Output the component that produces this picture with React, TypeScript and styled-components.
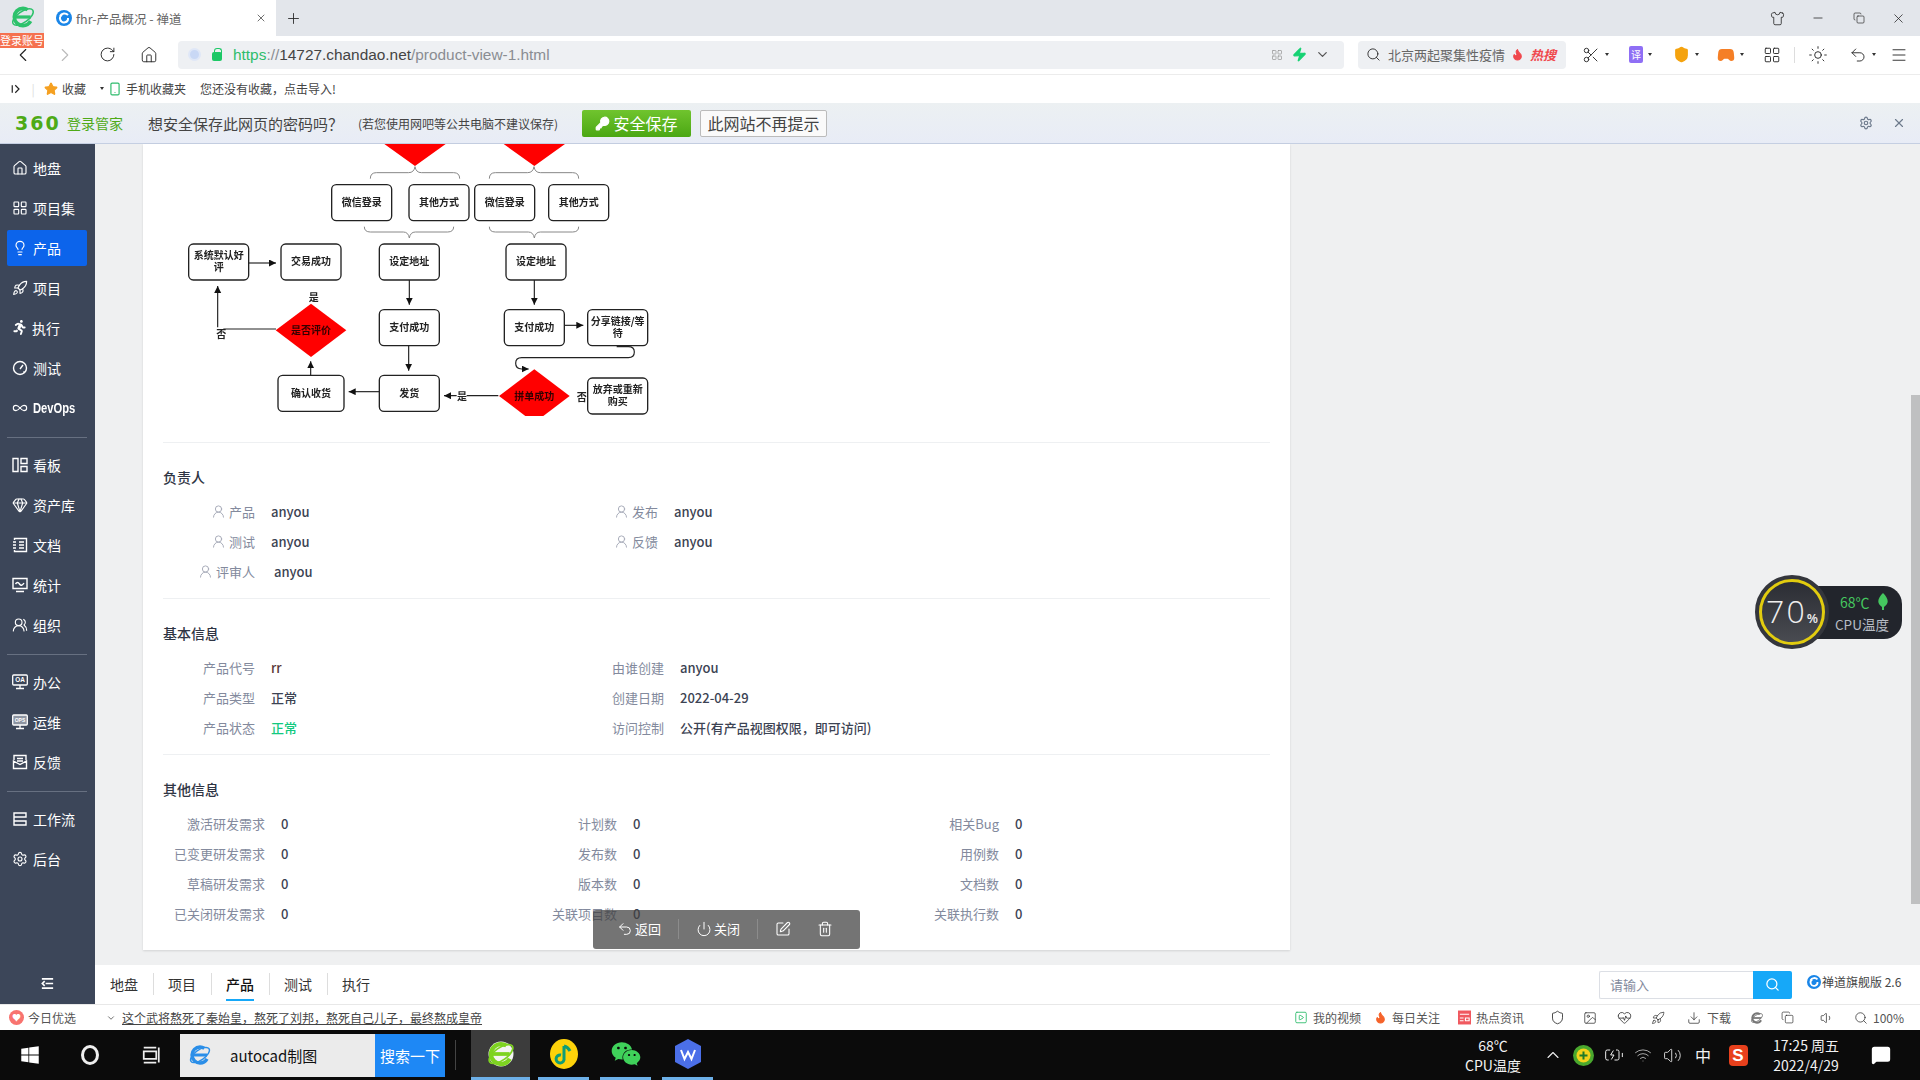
import styled, { createGlobalStyle } from 'styled-components'
import {
    ChevronLeft, ChevronRight, ChevronDown, ChevronUp, RotateCw, House, Search, Zap, Scissors, LayoutGrid, Sun, Undo2, Menu,
    Shirt, Minus, Copy, X, Plus, Settings, Star, Smartphone, KeyRound, Lightbulb, Rocket, Infinity as InfinityIcon, Flame, Gamepad2,
    Gem, UsersRound, UserRound, Power, SquarePen, Trash2, Shield, Image as ImageIcon, HeartPulse, Download, Volume1, Volume2, Wifi,
    BatteryCharging, MessageSquare, SquarePlay,
} from 'lucide-react'
import { FaRunning, FaWindows, FaWeixin } from 'react-icons/fa'
import type { ReactNode } from 'react'

const Global = createGlobalStyle`
    html, body { margin: 0; padding: 0; background: #fff; overflow: hidden; }
    * { box-sizing: border-box; }
    body { font-family: "Noto Sans CJK SC", "Liberation Sans", sans-serif; font-size: 13px; color: #3c4353; }
`

const Page = styled.div`
    position: relative;
    display: flex;
    flex-direction: column;
    width: 1920px;
    height: 1080px;
    overflow: hidden;
`

const Slot = styled.div<{ $w: number; $color?: string }>`
    display: flex;
    align-items: center;
    justify-content: center;
    flex: none;
    width: ${p => p.$w}px;
    height: 100%;
    color: ${p => p.$color || '#222'};
`

const Spring = styled.div`flex: 1;`

/* ---- browser chrome ---- */
const TabBar = styled.div`
    display: flex;
    height: 36px;
    background: #e3e6eb;
    padding-left: 44px;
`

const Tab = styled.div`
    display: flex;
    align-items: center;
    width: 232px;
    padding-left: 12px;
    background: #fff;
    font-size: 12.5px;
    color: #666;
`

const TabTitle = styled.span`
    margin-left: 4px;
    flex: 1;
`

const Logo = styled.div`
    position: absolute;
    left: 10px;
    top: 4px;
`

const Badge = styled.div`
    position: absolute;
    left: 0;
    top: 33px;
    width: 44px;
    height: 15px;
    background: #f5714f;
    color: #fff;
    font-size: 11px;
    line-height: 15px;
    text-align: center;
    white-space: nowrap;
`

const Toolbar = styled.div`
    display: flex;
    align-items: center;
    height: 39px;
    padding: 5px 0 6px 2px;
    border-bottom: 1px solid #ececec;
    background: #fff;
`

const Address = styled.div`
    display: flex;
    align-items: center;
    flex: none;
    width: 1166px;
    height: 28px;
    margin-left: 8px;
    padding-left: 10px;
    background: #eef0f3;
    border-radius: 4px;
`

const Eye = styled.div`
    width: 13px;
    height: 13px;
    border-radius: 50%;
    background: #c9d8f5;
    border: 2px solid #dfe7f7;
`

const Lock = styled.div`
    width: 10px;
    height: 9px;
    margin: 3px 0 0 11px;
    border-radius: 2px;
    background: #1cc866;
    position: relative;
    &::before {
        content: '';
        position: absolute;
        left: 2px;
        top: -4px;
        width: 6px;
        height: 6px;
        border: 1.5px solid #1cc866;
        border-bottom: 0;
        border-radius: 3px 3px 0 0;
    }
`

const Url = styled.div`
    margin-left: 11px;
    font: 15.4px "Liberation Sans", sans-serif;
    color: #8a8d92;
    flex: 1;
`

const UrlPart = styled.span<{ $color: string }>`
    color: ${p => p.$color};
`

const HotSearch = styled.div`
    display: flex;
    align-items: center;
    flex: none;
    width: 208px;
    height: 28px;
    margin-left: 14px;
    padding-left: 6px;
    background: #eef0f3;
    border-radius: 4px;
    font-size: 13px;
    color: #666;
    white-space: nowrap;
`

const HotTag = styled.span`
    margin-left: 1px;
    color: #f0484d;
    font-weight: 700;
    font-style: italic;
`

const ToolGap = styled.div`
    flex: none;
    width: 3px;
`

const ToolDrop = styled.div<{ $w?: number }>`
    display: flex;
    align-items: center;
    justify-content: center;
    flex: none;
    width: ${p => p.$w ?? 45}px;
    padding-left: 8px;
    gap: 5px;
    color: #222;
    &::after {
        content: '';
        border-top: 3px solid #333;
        border-left: 2.5px solid transparent;
        border-right: 2.5px solid transparent;
    }
`

const ToolSep = styled.div`
    width: 1px;
    height: 16px;
    background: #ddd;
    flex: none;
`

const Tile = styled.div<{ $bg: string }>`
    width: 14px;
    height: 17px;
    background: ${p => p.$bg};
    border-radius: 2px;
    color: #fff;
    font-size: 10px;
    line-height: 17px;
    text-align: center;
`

const Bookmarks = styled.div`
    display: flex;
    align-items: center;
    height: 28px;
    padding: 0 0 1px 10px;
    font-size: 12px;
    color: #444;
    background: #fff;
`

const BookText = styled.span<{ $ml?: number }>`
    margin-left: ${p => p.$ml ?? 0}px;
    white-space: nowrap;
`

const Caret = styled.span`
    margin-left: 14px;
    border-top: 3px solid #333;
    border-left: 2.5px solid transparent;
    border-right: 2.5px solid transparent;
`

const PassBar = styled.div`
    display: flex;
    align-items: center;
    height: 41px;
    padding-left: 15px;
    background: linear-gradient(#ecf0f2, #e8ecf6);
    border-bottom: 1px solid #c5cfe2;
    color: #444;
`

const Brand360 = styled.span`
    font: 700 19px "DejaVu Sans", sans-serif;
    letter-spacing: 2px;
    color: #4eaa16;
    width: 52px;
`

const BrandName = styled.span`
    font-size: 14px;
    color: #4eaa16;
    width: 81px;
`

const PassAsk = styled.span`
    font-size: 15px;
    width: 210px;
    white-space: nowrap;
`

const PassNote = styled.span`
    font-size: 12px;
    width: 224px;
    white-space: nowrap;
`

const SaveBtn = styled.div`
    display: flex;
    align-items: center;
    justify-content: center;
    gap: 3px;
    width: 109px;
    height: 27px;
    border-radius: 2px;
    background: linear-gradient(#70c42e, #4ba713);
    color: #fff;
    font-size: 16px;
`

const NoAskBtn = styled.div`
    width: 127px;
    height: 27px;
    margin-left: 9px;
    border: 1px solid #bbb;
    border-radius: 2px;
    background: #fafafa;
    color: #444;
    font-size: 16px;
    line-height: 25px;
    text-align: center;
`

/* ---- zentao page ---- */
const Main = styled.div`
    display: flex;
    height: 860px;
`

const Sidebar = styled.nav`
    display: flex;
    flex-direction: column;
    flex: none;
    width: 95px;
    padding-top: 6px;
    background: #3c4659;
`

const NavItem = styled.div<{ $active?: boolean }>`
    display: flex;
    align-items: center;
    gap: 5px;
    height: 36px;
    margin: 0 8px 4px 7px;
    padding: 0 0 1px 5px;
    border-radius: 2px;
    color: #fff;
    font-size: 14px;
    white-space: nowrap;
    background: ${p => (p.$active ? '#0c64eb' : 'transparent')};
`

const DevOps = styled.span`
    display: inline-block;
    font: 700 14px "Liberation Sans", sans-serif;
    transform: scaleX(0.8);
    transform-origin: left center;
`

const NavLine = styled.div`
    height: 1px;
    margin: 7px 8px 9px 7px;
    background: #677081;
`

const NavToggle = styled.div`
    display: flex;
    align-items: center;
    justify-content: center;
    height: 40px;
    margin-top: auto;
    padding-bottom: 2px;
    color: #fff;
`

const Content = styled.div`
    display: flex;
    flex-direction: column;
    flex: 1;
    min-width: 0;
    background: #eff0f1;
`

const Scroller = styled.div`
    display: flex;
    flex: none;
    height: 821px;
`

const Card = styled.div`
    width: 1147px;
    height: 806px;
    margin-left: 48px;
    padding: 0 20px;
    background: #fff;
    box-shadow: 0 1px 2px rgba(0, 0, 0, 0.12);
    overflow: hidden;
`

const Flow = styled.svg`
    display: block;
    margin-left: 7px;
    filter: blur(0.3px);
`

const Section = styled.section`
    padding: 24px 0 12px;
    border-top: 1px solid #eef0f2;
`

const Heading = styled.h3`
    margin: 0 0 9px;
    font-size: 14px;
    line-height: 20px;
    font-weight: 500;
    color: #2f3544;
`

const FieldGrid = styled.div<{ $cols: string }>`
    display: grid;
    grid-template-columns: ${p => p.$cols};
    grid-auto-rows: 30px;
`

const Field = styled.div<{ $gap?: number }>`
    display: flex;
    align-items: center;
    gap: ${p => p.$gap ?? 16}px;
`

const Label = styled.div<{ $w: number }>`
    display: flex;
    align-items: center;
    justify-content: flex-end;
    gap: 3px;
    width: ${p => p.$w}px;
    color: #838a9d;
    white-space: nowrap;
`

const Value = styled.div<{ $color?: string }>`
    color: ${p => p.$color || '#3c4353'};
    font-weight: 500;
    white-space: nowrap;
`

const ScrollSpace = styled.div`
    flex: 1;
`

const ScrollThumb = styled.div`
    flex: none;
    width: 9px;
    height: 509px;
    margin-top: 251px;
    background: #bfc0c1;
`

const BottomNav = styled.div`
    display: flex;
    align-items: center;
    height: 39px;
    background: #fff;
    font-size: 14px;
    color: #333;
`

const BottomLink = styled.div<{ $active?: boolean }>`
    position: relative;
    margin-top: -2px;
    padding: 0 15px;
    line-height: 22px;
    font-weight: ${p => (p.$active ? 500 : 400)};
    color: ${p => (p.$active ? '#111' : '#333')};
    & + & { border-left: 1px solid #ddd; padding-left: 14px; }
    ${p => p.$active && `
        &::after {
            content: '';
            position: absolute;
            left: 14px;
            right: 15px;
            bottom: -6px;
            height: 2px;
            background: #16a8f8;
        }
    `}
`

const SearchInput = styled.div`
    width: 154px;
    height: 28px;
    padding-left: 10px;
    border: 1px solid #dcdfe5;
    border-right: 0;
    border-radius: 2px 0 0 2px;
    color: #838a9d;
    font-size: 13px;
    line-height: 26px;
`

const SearchBtn = styled.div`
    display: flex;
    align-items: center;
    justify-content: center;
    width: 39px;
    height: 28px;
    border-radius: 0 2px 2px 0;
    background: #16a8f8;
    color: #fff;
`

const Version = styled.div`
    display: flex;
    align-items: center;
    gap: 1px;
    width: 128px;
    padding-left: 15px;
    margin-top: -6px;
    font-size: 12px;
    color: #444;
    white-space: nowrap;
`

const Floater = styled.div`
    position: absolute;
    left: 593px;
    top: 910px;
    display: flex;
    align-items: center;
    width: 267px;
    height: 39px;
    padding: 0 0 2px 24px;
    border-radius: 3px;
    background: rgba(64, 64, 64, 0.73);
    color: #fff;
    font-size: 13px;
`

const FloatBtn = styled.div`
    display: flex;
    align-items: center;
    gap: 2px;
`

const FloatSep = styled.div`
    width: 1px;
    height: 20px;
    margin: 0 17px;
    background: #8c8c8c;
`

const FloatTrash = styled.div`
    display: flex;
    margin-left: 26px;
`

const CpuWidget = styled.div`
    position: absolute;
    left: 1755px;
    top: 574px;
    display: flex;
    align-items: center;
    width: 147px;
    height: 76px;
`

const CpuDial = styled.div`
    z-index: 1;
    flex: none;
    display: flex;
    align-items: baseline;
    justify-content: center;
    width: 74px;
    height: 74px;
    padding-top: 9px;
    border-radius: 50%;
    border: 5px solid #34363c;
    outline: 3px solid #e2cc0f;
    outline-offset: -7px;
    background: linear-gradient(#2a2c33, #4a4c52);
    color: #eee;
    font: 300 32px "Open Sans", sans-serif;
    letter-spacing: 2px;
`

const CpuUnit = styled.span`
    font-size: 13px;
    font-weight: 600;
    letter-spacing: 0;
`

const CpuPill = styled.div`
    flex: 1;
    height: 53px;
    margin-left: -20px;
    padding: 5px 0 0 26px;
    border-radius: 0 18px 18px 0;
    background: #22252c;
    color: #b7bcc4;
    font-size: 13.5px;
    line-height: 22px;
    white-space: nowrap;
`

const CpuTemp = styled.div`
    display: flex;
    align-items: center;
    gap: 7px;
    padding-left: 5px;
    font-size: 14px;
    color: #45c75f;
`

const StatusBar = styled.div`
    display: flex;
    align-items: center;
    height: 26px;
    border-top: 1px solid #e8e8e8;
    padding-left: 9px;
    background: #fff;
    font-size: 12px;
    color: #555;
    white-space: nowrap;
`

const StatusText = styled.span<{ $ml?: number; $w?: number }>`
    margin-left: ${p => p.$ml ?? 0}px;
    ${p => p.$w && `width: ${p.$w}px;`}
`

const NewsLink = styled.span`
    margin-left: 6px;
    text-decoration: underline;
    color: #444;
`

const HeartDot = styled.div`
    display: flex;
    align-items: center;
    justify-content: center;
    width: 15px;
    height: 15px;
    border-radius: 50%;
    background: #f8736f;
    color: #fff;
    font-size: 9px;
`

const Taskbar = styled.div`
    display: flex;
    align-items: center;
    height: 50px;
    background: #0b0b0b;
    color: #f2f2f2;
`

const RingIcon = styled.div`
    width: 18px;
    height: 20px;
    border: 3px solid #eee;
    border-radius: 50%;
`

const TaskSearch = styled.div`
    display: flex;
    align-items: center;
    width: 265px;
    height: 43px;
    padding-left: 8px;
    background: #ebebeb;
    color: #111;
    font-size: 15px;
`

const TaskSearchBtn = styled.div`
    flex: none;
    width: 70px;
    height: 100%;
    margin-left: auto;
    background: #1e88f5;
    color: #fff;
    line-height: 43px;
    text-align: center;
    white-space: nowrap;
`

const TaskSep = styled.div`
    width: 1px;
    height: 30px;
    margin: 0 15px 0 10px;
    background: #444;
`

const TaskApp = styled.div<{ $w: number; $ml: number; $active?: boolean }>`
    display: flex;
    align-items: center;
    justify-content: center;
    flex: none;
    width: ${p => p.$w}px;
    height: 50px;
    margin-left: ${p => p.$ml}px;
    background: ${p => (p.$active ? '#3c3c3c' : 'transparent')};
    border-bottom: 3px solid #6db0e8;
`

const TaskTwoLines = styled.div<{ $w: number; $size?: number }>`
    flex: none;
    width: ${p => p.$w}px;
    font-size: ${p => p.$size ?? 14}px;
    line-height: 20px;
    text-align: center;
    white-space: nowrap;
`

const SogouMark = styled.div`
    width: 19px;
    height: 21px;
    border-radius: 4px;
    background: #e8401c;
    color: #fff;
    font: 700 17px/21px "Liberation Sans", sans-serif;
    text-align: center;
`

const FlowBox = ({ x, y, w = 180, lines }: { x: number; y: number; w?: number; lines: string[] }) => (
    <g>
        <rect x={x} y={y} width={w} height={108} rx={14} fill="#fff" stroke="#222" strokeWidth={4} />
        {lines.map((l, i) => (
            <text key={l} x={x + w / 2} y={y + 64 + (i - (lines.length - 1) / 2) * 36} textAnchor="middle" fontSize={30} fontWeight={700} fill="#222">{l}</text>
        ))}
    </g>
)

const braceTop = (x: number) => `M${x} 116q0-18 18-18h97q16 0 19-18q3 18 19 18h97q18 0 18 18`
const braceBottom = (x: number) => `M${x} 260q0 16 18 16h99q15 0 18 18q3-18 18-18h97q18 0 18-16`

const FlowChart = () => (
    <Flow width={500} height={298} viewBox="0 12 1500 894" fontFamily='"Noto Sans CJK SC", sans-serif'>
        <defs>
            <marker id="tip" markerWidth="8" markerHeight="8" refX="6" refY="3" orient="auto">
                <path d="M0 0L6 3L0 6z" fill="#111" />
            </marker>
        </defs>
        <path d="M643 12h184l-92 66zM1001 12h184l-92 66z" fill="#f00" />
        <path d={braceTop(601)} fill="none" stroke="#888" strokeWidth={3} />
        <path d={braceTop(958)} fill="none" stroke="#888" strokeWidth={3} />
        <path d={braceBottom(583)} fill="none" stroke="#888" strokeWidth={3} />
        <path d={braceBottom(958)} fill="none" stroke="#888" strokeWidth={3} />
        <FlowBox x={485} y={134} lines={['微信登录']} />
        <FlowBox x={717} y={134} lines={['其他方式']} />
        <FlowBox x={914} y={134} lines={['微信登录']} />
        <FlowBox x={1136} y={134} lines={['其他方式']} />
        <FlowBox x={56} y={312} lines={['系统默认好', '评']} />
        <FlowBox x={333} y={312} lines={['交易成功']} />
        <FlowBox x={628} y={312} lines={['设定地址']} />
        <FlowBox x={1008} y={312} lines={['设定地址']} />
        <FlowBox x={628} y={509} lines={['支付成功']} />
        <FlowBox x={1003} y={509} lines={['支付成功']} />
        <FlowBox x={1253} y={509} lines={['分享链接/等', '待']} />
        <FlowBox x={324} y={706} w={198} lines={['确认收货']} />
        <FlowBox x={628} y={706} lines={['发货']} />
        <FlowBox x={1253} y={714} lines={['放弃或重新', '购买']} />
        <g fill="none" stroke="#222" strokeWidth={3.5} markerEnd="url(#tip)">
            <path d="M236 369H318" />
            <path d="M143 562V438" />
            <path d="M718 420V494" />
            <path d="M1093 420V494" />
            <path d="M716 617V692" />
            <path d="M1183 556H1240" />
            <path d="M628 755H536" />
            <path d="M422 706V664" />
            <path d="M985 767H822" />
            <path d="M1340 620H1375q18 0 18 16q0 17-18 17H1055q-18 0-18 17q0 17 18 17H1076" />
        </g>
        <path d="M318 567H160" fill="none" stroke="#222" strokeWidth={3.5} />
        <path d="M423 491L529 571L423 651L317 571z" fill="#f00" />
        <path d="M987 768L1093 688L1199 768L1120 828H1066z" fill="#f00" />
        <g fontSize={30} fontWeight={700} textAnchor="middle" fill="#222">
            <text x={423} y={582} fill="#300">是否评价</text>
            <text x={1093} y={779} fill="#300">拼单成功</text>
            <text x={431} y={484}>是</text>
            <text x={154} y={595}>否</text>
            <rect x={860} y={752} width={30} height={32} fill="#fff" />
            <text x={876} y={780}>是</text>
            <text x={1235} y={782}>否</text>
        </g>
    </Flow>
)

const Ie = ({ size, color, bg }: { size: number; color: string; bg?: string }) => (
    <svg width={size} height={size} viewBox="0 0 24 24">
        {bg && <circle cx="12" cy="12" r="10" fill={bg} />}
        <ellipse cx="12" cy="12" rx="11" ry="5" fill="none" stroke={color} strokeWidth="1.4" transform="rotate(-35 12 12)" />
        <circle cx="12" cy="12" r="8" fill="none" stroke={color} strokeWidth="3.4" strokeDasharray="38 12" strokeDashoffset="-4" />
        <path d="M5 12h14" stroke={color} strokeWidth="3" />
    </svg>
)

const Zentao = ({ size }: { size: number }) => (
    <svg width={size} height={size} viewBox="0 0 16 16">
        <circle cx="8" cy="8" r="8" fill="#1a86e8" />
        <path d="M4 6a5 5 0 0 1 8-1M12 8a4 4 0 1 1-6-3" fill="none" stroke="#fff" strokeWidth="2" />
    </svg>
)

const MonitorTag = ({ tag, filled }: { tag: string; filled?: boolean }) => (
    <svg width="16" height="16" viewBox="0 0 16 16">
        <rect x="0.7" y="1" width="14.6" height="10" rx="1" fill={filled ? '#8d94a1' : 'none'} stroke="#fff" strokeWidth="1.3" />
        <path d="M8 11v3M4 14.5h8" stroke="#fff" strokeWidth="1.3" />
        <text x="8" y="8.2" textAnchor="middle" fontSize={tag.length > 2 ? 5 : 6.4} fontWeight={700} fill="#fff" fontFamily="Liberation Sans">{tag}</text>
    </svg>
)

const Stroke = ({ d, size = 16, width = 1.4 }: { d: string; size?: number; width?: number }) => (
    <svg width={size} height={size} viewBox="0 0 16 16" fill="none" stroke="currentColor" strokeWidth={width}>
        <path d={d} />
    </svg>
)

const NewsIcon = () => (
    <svg width="14" height="15" viewBox="0 0 14 15">
        <rect width="14" height="15" fill="#f0595f" />
        <path d="M2 4h10M2 8h4M8 8h4v3h-4zM2 11h4" stroke="#fff" strokeWidth="1.2" fill="none" />
    </svg>
)

const nav: (string | [ReactNode, ReactNode, boolean?])[] = [
    [<House size={16} strokeWidth={1.7} />, '地盘'],
    [<LayoutGrid size={16} strokeWidth={1.7} />, '项目集'],
    [<Lightbulb size={16} strokeWidth={1.7} />, '产品', true],
    [<Rocket size={16} strokeWidth={1.7} />, '项目'],
    [<FaRunning size={15} />, '执行'],
    [<Stroke d="M13 13l-1.5-1.5M8 1.5a6.5 6.5 0 1 0 0 13a6.5 6.5 0 0 0 0-13zM8 9l3-4" />, '测试'],
    [<InfinityIcon size={16} strokeWidth={1.7} />, <DevOps>DevOps</DevOps>],
    'line',
    [<Stroke d="M1 1.5h5v13h-5zM9 1.5h6v5h-6zM9 9.5h6v5h-6z" />, '看板'],
    [<Gem size={16} strokeWidth={1.7} />, '资产库'],
    [<Stroke d="M2.5 3v-1.5h12v13h-12v-1.5M1 5h3M1 8h3M1 11h3M7 5h5M7 8h5M7 11h5" />, '文档'],
    [<Stroke d="M1 1.5h14v10h-14zM3.5 7q2-3 4 0t4.5-1M4 14.5h8" />, '统计'],
    [<UsersRound size={16} strokeWidth={1.7} />, '组织'],
    'line',
    [<MonitorTag tag="OA" />, '办公'],
    [<MonitorTag tag="OPS" filled />, '运维'],
    [<Stroke d="M2 6v-4.5h12v4.5M1.5 7l6.5 3.5l6.5-3.5v7.5h-13zM5 4.5h6M5 7h6" />, '反馈'],
    'line',
    [<Stroke d="M2 2h12v4h-12zM2 10h12v4h-12zM2 6v4" />, '工作流'],
    [<Settings size={16} strokeWidth={1.7} />, '后台'],
]

const person = <UserRound size={15} strokeWidth={1.5} color="#a3a8b5" />

const otherRows = [
    ['激活研发需求', '计划数', '相关Bug'],
    ['已变更研发需求', '发布数', '用例数'],
    ['草稿研发需求', '版本数', '文档数'],
    ['已关闭研发需求', '关联项目数', '关联执行数'],
]

const App = () => {
    return (
        <Page>
            <Global />
            <TabBar>
                <Tab>
                    <Zentao size={16} />
                    <TabTitle>fhr-产品概况 - 禅道</TabTitle>
                    <Slot $w={30}><X size={12} strokeWidth={1.3} /></Slot>
                </Tab>
                <Slot $w={34}><Plus size={17} strokeWidth={1.2} /></Slot>
                <Spring />
                <Slot $w={40}><Shirt size={15} strokeWidth={1.3} /></Slot>
                <Slot $w={42}><Minus size={14} strokeWidth={1.3} /></Slot>
                <Slot $w={40}><Copy size={12} strokeWidth={1.3} /></Slot>
                <Slot $w={38}><X size={15} strokeWidth={1.2} /></Slot>
                <Slot $w={3} />
            </TabBar>
            <Logo><Ie size={26} color="#2dc26b" /></Logo>
            <Badge>登录账号</Badge>

            <Toolbar>
                <Slot $w={42}><ChevronLeft size={22} strokeWidth={1.2} /></Slot>
                <Slot $w={42} $color="#bbb"><ChevronRight size={22} strokeWidth={1.2} /></Slot>
                <Slot $w={42}><RotateCw size={17} strokeWidth={1.3} /></Slot>
                <Slot $w={42}><House size={18} strokeWidth={1.2} /></Slot>
                <Address>
                    <Eye />
                    <Lock />
                    <Url>
                        <UrlPart $color="#2ebd6b">https</UrlPart>://<UrlPart $color="#444">14727.chandao.net</UrlPart>/product-view-1.html
                    </Url>
                    <LayoutGrid size={12} color="#999" strokeWidth={1.5} />
                    <Slot $w={32} $color="#16d273"><Zap size={15} fill="#16d273" /></Slot>
                    <ChevronDown size={15} color="#555" />
                    <Slot $w={14} />
                </Address>
                <HotSearch>
                    <Slot $w={18}><Search size={15} strokeWidth={1.4} /></Slot>
                    <BookText $ml={6}>北京两起聚集性疫情</BookText>
                    <Slot $w={24} $color="#f0484d"><Flame size={13} fill="#f0484d" /></Slot>
                    <HotTag>热搜</HotTag>
                </HotSearch>
                <ToolGap />
                <ToolDrop><Scissors size={18} strokeWidth={1.2} /></ToolDrop>
                <ToolDrop><Tile $bg="#8f6ff5">译</Tile></ToolDrop>
                <ToolDrop><Shield size={17} color="#f5a30f" fill="#f5a30f" /></ToolDrop>
                <ToolDrop><Gamepad2 size={18} color="#f57f26" fill="#f57f26" /></ToolDrop>
                <Slot $w={45}><LayoutGrid size={18} strokeWidth={1.2} /></Slot>
                <ToolSep />
                <Slot $w={45}><Sun size={20} strokeWidth={1.1} /></Slot>
                <ToolDrop $w={36}><Undo2 size={18} strokeWidth={1.2} /></ToolDrop>
                <Slot $w={46}><Menu size={18} strokeWidth={1.2} /></Slot>
            </Toolbar>

            <Bookmarks>
                <Slot $w={12}><Stroke d="M3 3v10M7 3l5 5l-5 5" size={12} width={1.6} /></Slot>
                <Slot $w={22} $color="#ddd">|</Slot>
                <Star size={14} fill="#f5a021" color="#f5a021" />
                <BookText $ml={4}>收藏</BookText>
                <Caret />
                <Slot $w={22} $color="#2dbb6b"><Smartphone size={14} /></Slot>
                <BookText>手机收藏夹</BookText>
                <BookText $ml={14}>您还没有收藏，点击导入!</BookText>
            </Bookmarks>

            <PassBar>
                <Brand360>360</Brand360>
                <BrandName>登录管家</BrandName>
                <PassAsk>想安全保存此网页的密码吗？</PassAsk>
                <PassNote>(若您使用网吧等公共电脑不建议保存)</PassNote>
                <SaveBtn><KeyRound size={15} fill="#fff" />安全保存</SaveBtn>
                <NoAskBtn>此网站不再提示</NoAskBtn>
                <Spring />
                <Slot $w={36} $color="#6d7a8c"><Settings size={14} /></Slot>
                <Slot $w={30} $color="#6d7a8c"><X size={14} /></Slot>
                <Slot $w={6} />
            </PassBar>

            <Main>
                <Sidebar>
                    {nav.map((item, i) =>
                        typeof item === 'string' ? (
                            <NavLine key={i} />
                        ) : (
                            <NavItem key={i} $active={item[2]}>{item[0]}{item[1]}</NavItem>
                        ),
                    )}
                    <NavToggle><Stroke d="M2 3h12M6 8h8M2 13h12M5 5.5L2.5 8L5 10.5" size={15} width={1.8} /></NavToggle>
                </Sidebar>
                <Content>
                    <Scroller>
                        <Card>
                            <FlowChart />
                            <Section>
                                <Heading>负责人</Heading>
                                <FieldGrid $cols="403px 1fr">
                                    <Field><Label $w={92}>{person}产品</Label><Value>anyou</Value></Field>
                                    <Field><Label $w={92}>{person}发布</Label><Value>anyou</Value></Field>
                                    <Field><Label $w={92}>{person}测试</Label><Value>anyou</Value></Field>
                                    <Field><Label $w={92}>{person}反馈</Label><Value>anyou</Value></Field>
                                    <Field $gap={19}><Label $w={92}>{person}评审人</Label><Value>anyou</Value></Field>
                                </FieldGrid>
                            </Section>
                            <Section>
                                <Heading>基本信息</Heading>
                                <FieldGrid $cols="409px 1fr">
                                    <Field><Label $w={92}>产品代号</Label><Value $color="#5a3838">rr</Value></Field>
                                    <Field><Label $w={92}>由谁创建</Label><Value>anyou</Value></Field>
                                    <Field><Label $w={92}>产品类型</Label><Value>正常</Value></Field>
                                    <Field><Label $w={92}>创建日期</Label><Value>2022-04-29</Value></Field>
                                    <Field><Label $w={92}>产品状态</Label><Value $color="#12c97f">正常</Value></Field>
                                    <Field><Label $w={92}>访问控制</Label><Value>公开(有产品视图权限，即可访问)</Value></Field>
                                </FieldGrid>
                            </Section>
                            <Section>
                                <Heading>其他信息</Heading>
                                <FieldGrid $cols="352px 382px 1fr">
                                    {otherRows.flat().map(label => (
                                        <Field key={label}><Label $w={102}>{label}</Label><Value>0</Value></Field>
                                    ))}
                                </FieldGrid>
                            </Section>
                        </Card>
                        <ScrollSpace />
                        <ScrollThumb />
                    </Scroller>
                    <BottomNav>
                        <BottomLink>地盘</BottomLink>
                        <BottomLink>项目</BottomLink>
                        <BottomLink $active>产品</BottomLink>
                        <BottomLink>测试</BottomLink>
                        <BottomLink>执行</BottomLink>
                        <Spring />
                        <SearchInput>请输入</SearchInput>
                        <SearchBtn><Search size={15} /></SearchBtn>
                        <Version><Zentao size={14} />禅道旗舰版 2.6</Version>
                    </BottomNav>
                </Content>
            </Main>

            <Floater>
                <FloatBtn><Undo2 size={16} strokeWidth={1.5} />返回</FloatBtn>
                <FloatSep />
                <FloatBtn><Power size={16} strokeWidth={1.5} />关闭</FloatBtn>
                <FloatSep />
                <SquarePen size={16} strokeWidth={1.6} />
                <FloatTrash><Trash2 size={16} strokeWidth={1.6} /></FloatTrash>
            </Floater>

            <CpuWidget>
                <CpuDial>70<CpuUnit>%</CpuUnit></CpuDial>
                <CpuPill>
                    <CpuTemp>68℃ <svg width="12" height="17" viewBox="0 0 12 17"><path d="M6 0C11 5 13 10 7 14V17H5V14C-1 10 1 5 6 0z" fill="#45c75f" /></svg></CpuTemp>
                    CPU温度
                </CpuPill>
            </CpuWidget>

            <StatusBar>
                <HeartDot>♥</HeartDot>
                <StatusText $ml={4} $w={78}>今日优选</StatusText>
                <ChevronDown size={10} />
                <NewsLink>这个武将熬死了秦始皇，熬死了刘邦，熬死自己儿子，最终熬成皇帝</NewsLink>
                <Spring />
                <Slot $w={14} $color="#2dbb6b"><SquarePlay size={15} strokeWidth={1.5} /></Slot>
                <StatusText $ml={5} $w={61}>我的视频</StatusText>
                <Slot $w={13} $color="#f5632a"><Flame size={15} fill="#f5632a" /></Slot>
                <StatusText $ml={5} $w={66}>每日关注</StatusText>
                <Slot $w={13}><NewsIcon /></Slot>
                <StatusText $ml={5} $w={73}>热点资讯</StatusText>
                <Slot $w={16}><Shield size={15} strokeWidth={1.3} /></Slot>
                <Slot $w={49}><ImageIcon size={14} strokeWidth={1.2} /></Slot>
                <Slot $w={21}><HeartPulse size={15} strokeWidth={1.2} /></Slot>
                <Slot $w={46}><Rocket size={14} strokeWidth={1.2} /></Slot>
                <Slot $w={26}><Download size={14} strokeWidth={1.2} /></Slot>
                <StatusText $w={37}>下载</StatusText>
                <Slot $w={26}><Ie size={14} color="#777" /></Slot>
                <Slot $w={35}><Copy size={13} strokeWidth={1.2} /></Slot>
                <Slot $w={44}><Volume1 size={14} strokeWidth={1.2} /></Slot>
                <Slot $w={24}><Search size={14} strokeWidth={1.2} /></Slot>
                <StatusText $w={47}>100%</StatusText>
            </StatusBar>

            <Taskbar>
                <Slot $w={60} $color="#fff"><FaWindows size={20} /></Slot>
                <Slot $w={60}><RingIcon /></Slot>
                <Slot $w={60} $color="#eee"><Stroke d="M3 2h10M3 14h10M3 5h10v6h-10zM15 2v12" size={20} /></Slot>
                <TaskSearch>
                    <Ie size={24} color="#2a8ee8" />
                    <BookText $ml={18}>autocad制图</BookText>
                    <TaskSearchBtn>搜索一下</TaskSearchBtn>
                </TaskSearch>
                <TaskSep />
                <TaskApp $w={59} $ml={0} $active><Ie size={30} color="#7ed321" bg="#f4f4f4" /></TaskApp>
                <TaskApp $w={51} $ml={8}>
                    <svg width="30" height="30" viewBox="0 0 30 30"><ellipse cx="15" cy="15" rx="14" ry="15" fill="#fdd20a" /><path d="M15 7v12a4 4 0 1 1-3-3M15 7q4 1 6 5" fill="none" stroke="#0f9d76" strokeWidth="3" /></svg>
                </TaskApp>
                <TaskApp $w={51} $ml={11}><FaWeixin size={30} color="#3fd15a" /></TaskApp>
                <TaskApp $w={51} $ml={11}>
                    <svg width="28" height="30" viewBox="0 0 28 30"><path d="M14 0L27 7V23L14 30L1 23V7z" fill="#4b6fe8" /><path d="M7 11l3.5 9l3.5-7l3.5 7l3.5-9" fill="none" stroke="#fff" strokeWidth="2" /></svg>
                </TaskApp>
                <Spring />
                <TaskTwoLines $w={80}>68℃<br />CPU温度</TaskTwoLines>
                <Slot $w={39}><ChevronUp size={20} strokeWidth={1.3} color="#eee" /></Slot>
                <Slot $w={22}>
                    <svg width="21" height="21" viewBox="0 0 21 21"><circle cx="10.5" cy="10.5" r="10.5" fill="#4aa82e" /><circle cx="10.5" cy="10.5" r="7" fill="#f3d21b" /><path d="M10.5 6.5v8M6.5 10.5h8" stroke="#1d7a2a" strokeWidth="2" /></svg>
                </Slot>
                <Slot $w={40} $color="#eee"><BatteryCharging size={20} strokeWidth={1.2} /></Slot>
                <Slot $w={18} $color="#aaa"><Wifi size={18} strokeWidth={1.3} /></Slot>
                <Slot $w={40} $color="#ddd"><Volume2 size={19} strokeWidth={1.2} /></Slot>
                <Slot $w={22} $color="#f2f2f2"><TaskTwoLines $w={20} $size={16}>中</TaskTwoLines></Slot>
                <Slot $w={48}><SogouMark>S</SogouMark></Slot>
                <TaskTwoLines $w={88}>17:25 周五<br />2022/4/29</TaskTwoLines>
                <Slot $w={61} $color="#fff"><MessageSquare size={20} fill="#fff" /></Slot>
                <Slot $w={9} />
            </Taskbar>
        </Page>
    )
}

export default App
